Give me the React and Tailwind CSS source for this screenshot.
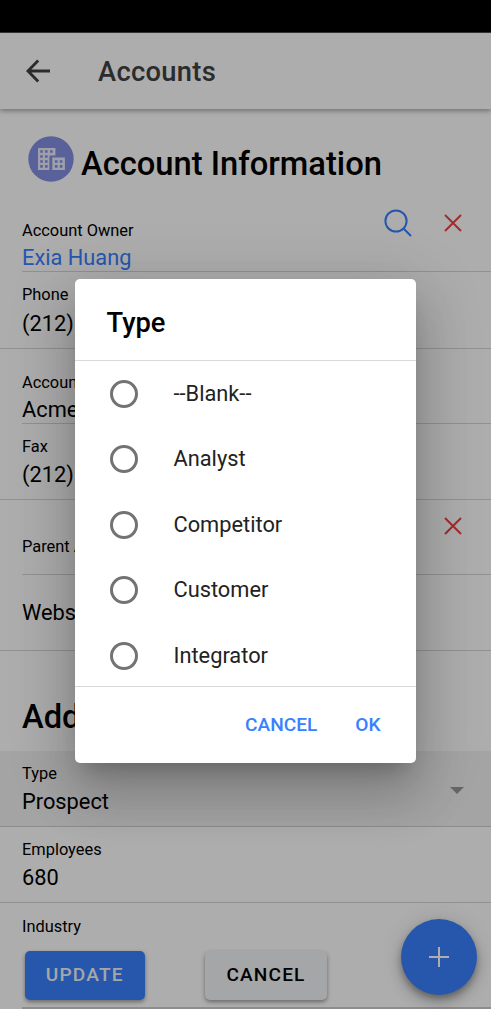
import React from "react";

const options = ["--Blank--", "Analyst", "Competitor", "Customer", "Integrator"];

function Label({ children }) {
  return <div className="h-6 text-[16.4px] leading-6 whitespace-nowrap">{children}</div>;
}

function Value({ children, className = "" }) {
  return <div className={`text-[21.8px] leading-[34px] whitespace-nowrap ${className}`}>{children}</div>;
}

function CloseIcon() {
  return (
    <svg className="h-[18px] w-[18px] shrink-0" viewBox="0 0 18 18" fill="none" stroke="#f04141" strokeWidth="2">
      <path d="M1 1 17 17M17 1 1 17" />
    </svg>
  );
}

function AccountIcon() {
  return (
    <svg className="mt-[27px] h-[46px] w-[46px] shrink-0" viewBox="0 0 46 46">
      <circle cx="23" cy="23" r="22.7" fill="#8490e4" />
      <path d="M10 12h17.4v7.4H21.4V34H10ZM24.3 21.6h12.6V34H24.3Z" fill="#e9ebfa" />
      <g fill="#8490e4">
        <path d="M12.2 14.2h2.6v2.6h-2.6zM17 14.2h2.6v2.6h-2.6zM22 14.2h2.6v2.6h-2.6zM12.2 19.2h2.6v2.6h-2.6zM17 19.2h2.6v2.6h-2.6zM12.2 24.2h2.6v2.6h-2.6zM17 24.2h2.6v2.6h-2.6zM12.2 29.1h2.6v2.6h-2.6zM17 29.1h2.6v2.6h-2.6z" />
        <path d="M26.9 24.2h2.6v2.6h-2.6zM31.8 24.2h2.6v2.6h-2.6zM26.9 29.1h2.6v2.6h-2.6zM31.8 29.1h2.6v2.6h-2.6z" />
      </g>
    </svg>
  );
}

function Page() {
  return (
    <div className="flex flex-col">
      <header className="z-10 flex h-[76px] shrink-0 items-center bg-white pl-[26px] shadow-[0_2px_5px_rgba(0,0,0,0.35)]">
        <svg className="h-6 w-6" viewBox="0 0 24 24" fill="none" stroke="#424242" strokeWidth="2.9">
          <path d="M24 12H2.5M12.2 1.6 2 12l10.2 10.4" />
        </svg>
        <h1 className="ml-12 pt-0.5 text-[27.3px] font-medium tracking-[0.3px] text-[#424242]">Accounts</h1>
      </header>

      <div className="flex h-[94px] pl-7">
        <AccountIcon />
        <h2 className="ml-[7px] pt-[36px] text-[32.7px] leading-[38px] font-medium whitespace-nowrap">Account Information</h2>
      </div>

      <div className="pl-[22px]">
        <div className="flex h-[69px] justify-between border-b border-[#d6d6d6] pt-[16px] pr-[29px]">
          <div>
            <Label>Account Owner</Label>
            <Value className="-mt-[2px] text-[#3880ff]">Exia Huang</Value>
          </div>
          <div className="-mt-[11px] flex items-start gap-8">
            <svg className="mt-px h-7 w-7" viewBox="0 0 28 28" fill="none" stroke="#3880ff" strokeWidth="2">
              <circle cx="12" cy="12" r="10.6" />
              <path d="m19.5 19.5 7.5 7.5" />
            </svg>
            <div className="mt-[6px]"><CloseIcon /></div>
          </div>
        </div>
      </div>
      <div className="h-[77px] border-b border-[#d6d6d6] pt-[11px] pl-[22px]">
        <Label>Phone</Label>
        <Value>(212)</Value>
      </div>

      <div className="pl-[22px]">
        <div className="h-[75px] border-b border-[#d6d6d6] pt-[22px]">
          <Label>Account Name</Label>
          <Value className="-mt-[2px]">Acme</Value>
        </div>
      </div>
      <div className="h-[76px] border-b border-[#d6d6d6] pt-[11px] pl-[22px]">
        <Label>Fax</Label>
        <Value className="-mt-px">(212)</Value>
      </div>

      <div className="pl-[22px]">
        <div className="flex h-[75px] justify-between border-b border-[#d6d6d6] pt-[17px] pr-[29px]">
          <div className="pt-[18px]"><Label>Parent Account</Label></div>
          <CloseIcon />
        </div>
      </div>
      <div className="h-[76px] border-b border-[#d6d6d6] pt-[21px] pl-[22px]">
        <Value>Website</Value>
      </div>

      <h2 className="h-[100px] pt-[47px] pl-[22px] text-[32.7px] leading-[38px] font-medium">Additional Info</h2>

      <div className="flex h-[76px] items-center justify-between border-b border-[#cfcfcf] bg-[#f2f2f2] pr-[27px] pl-[22px]">
        <div className="pt-1">
          <Label>Type</Label>
          <Value className="-mt-px">Prospect</Value>
        </div>
        <div className="mt-[3px] border-x-[7px] border-t-[7px] border-x-transparent border-t-[#999]" />
      </div>
      <div className="h-[76px] border-b border-[#d6d6d6] pt-[11px] pl-[22px]">
        <Label>Employees</Label>
        <Value className="-mt-px">680</Value>
      </div>
      <div className="pl-[22px]">
        <div className="h-[106px] border-b-2 border-[#d0d0d0] pt-3">
          <Label>Industry</Label>
          <div className="mt-3 flex gap-[60px] pl-[2.5px] text-[19.1px] font-medium tracking-[1.15px]">
            <button className="h-[49px] w-[120.5px] rounded-[5px] bg-[#3880ff] text-[#f4f5f8] shadow-[0_2px_4px_rgba(0,0,0,0.4)]">UPDATE</button>
            <button className="h-[49px] w-[122px] rounded-[5px] bg-[#f4f5f8] text-black shadow-[0_2px_4px_rgba(0,0,0,0.4)]">CANCEL</button>
          </div>
        </div>
      </div>
    </div>
  );
}

function TypeDialog() {
  return (
    <div className="absolute top-[279px] left-[75px] z-30 flex h-[484px] w-[341px] flex-col rounded-[5px] bg-white shadow-[0_15px_20px_-9px_rgba(0,0,0,0.2),0_33px_52px_4px_rgba(0,0,0,0.14),0_12px_63px_11px_rgba(0,0,0,0.12)]">
      <h2 className="h-[82px] shrink-0 border-b border-[#d9d9d9] pt-[28px] pl-[31.5px] text-[27.3px] leading-8 font-medium">Type</h2>
      <div className="flex h-[326px] shrink-0 flex-col overflow-hidden border-b border-[#d9d9d9]">
        {options.map((name) => (
          <div key={name} className="flex h-[65.5px] shrink-0 items-center pl-[35px] text-[21.8px] text-[#222]">
            <span className="mr-[35.5px] h-7 w-7 rounded-full border-[3px] border-[#737373]" />
            <span className="pt-px">{name}</span>
          </div>
        ))}
      </div>
      <div className="flex flex-1 items-center justify-end gap-[38px] pr-[35.5px] text-[19.1px] font-medium text-[#3880ff]">
        <button>CANCEL</button>
        <button>OK</button>
      </div>
    </div>
  );
}

export default function App() {
  return (
    <div className="relative h-[1009px] w-[491px] overflow-hidden bg-white pt-[33px] font-['Roboto',sans-serif] text-black">
      <Page />
      <button aria-label="Add" className="absolute top-[919px] left-[401px] flex h-[76px] w-[76px] items-center justify-center rounded-full bg-[#3880ff] shadow-[0_4px_7px_-1px_rgba(0,0,0,0.3),0_8px_14px_rgba(0,0,0,0.18),0_1px_22px_rgba(0,0,0,0.12)]">
        <svg className="h-5 w-5" viewBox="0 0 20 20" stroke="#fff" strokeWidth="2">
          <path d="M10 0v20M0 10h20" />
        </svg>
      </button>
      <div className="absolute inset-0 z-20 bg-black/32" />
      <div className="absolute inset-x-0 top-0 z-20 h-[33px] border-b border-[#333] bg-black" />
      <TypeDialog />
    </div>
  );
}
